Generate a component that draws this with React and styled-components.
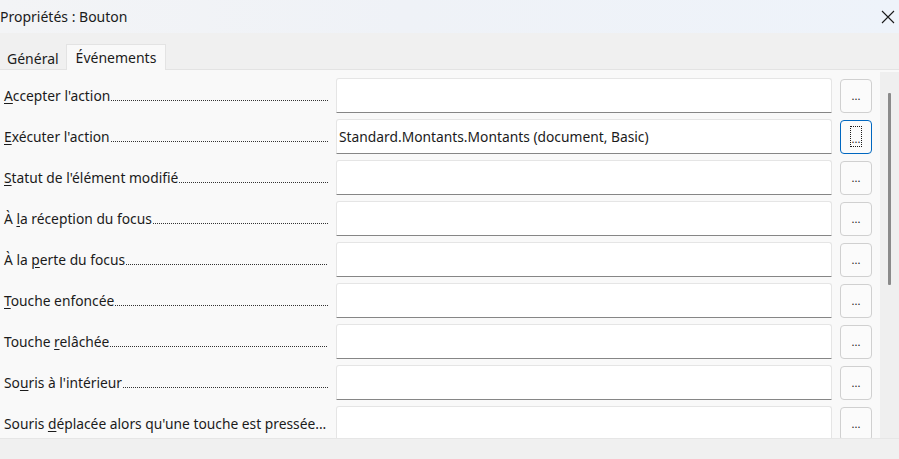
import React from 'react';
import styled, { createGlobalStyle } from 'styled-components';

const GlobalStyle = createGlobalStyle`
  html, body {
    margin: 0;
    padding: 0;
    background: #f0f0f0;
  }
  body {
    font-family: 'Noto Sans', 'Open Sans', sans-serif;
    color: #1b1b1b;
  }
`;

const Window = styled.div`
  width: 899px;
  height: 459px;
  display: flex;
  flex-direction: column;
  overflow: hidden;
  background: #f0f0f0;
`;

const TitleBar = styled.div`
  height: 33px;
  flex: none;
  display: flex;
  align-items: center;
  justify-content: space-between;
  background: linear-gradient(to right, #f3f4f6 0%, #eff2f7 45%, #eef3fa 100%);
`;

const Title = styled.span`
  font-size: 14px;
`;

const CloseButton = styled.button`
  width: 46px;
  height: 33px;
  border: none;
  background: transparent;
  display: flex;
  align-items: center;
  justify-content: flex-end;
  padding: 0 4px 0 0;
  color: #1a1a1a;
`;

const TabStrip = styled.div`
  height: 36px;
  flex: none;
  display: flex;
  align-items: flex-end;
`;

const Tab = styled.div`
  height: ${({ active }) => (active ? '26px' : '24px')};
  padding: 0 ${({ active }) => (active ? '9px' : '6px')};
  display: flex;
  align-items: center;
  font-size: 14px;
  box-sizing: border-box;
  background: ${({ active }) => (active ? '#f9f9f9' : 'transparent')};
  border: 1px solid ${({ active }) => (active ? '#e3e3e3' : 'transparent')};
  border-bottom: none;
  margin-bottom: -1px;
  position: relative;
  z-index: ${({ active }) => (active ? 1 : 0)};
`;

const Body = styled.div`
  flex: 1;
  display: flex;
  background: #f9f9f9;
  border-top: 1px solid #e3e3e3;
  overflow: hidden;
`;

const EventGrid = styled.div`
  display: grid;
  grid-template-columns: 324px 496px 32px;
  grid-auto-rows: 35px;
  column-gap: 8px;
  row-gap: 6px;
  padding: 8px 0 0 4px;
  align-items: center;
`;

const Label = styled.div`
  display: flex;
  align-items: baseline;
  font-size: 13.8px;
  white-space: nowrap;
`;

const LabelText = styled.span`
  white-space: pre;
`;

const Leader = styled.span`
  flex: 1;
  height: 1px;
  margin-left: 1px;
  background: repeating-linear-gradient(to right, #333 0 1px, transparent 1px 2px);
`;

const Key = styled.span`
  text-decoration: underline;
  text-underline-offset: 2px;
`;

const Field = styled.div`
  height: 35px;
  box-sizing: border-box;
  background: #fff;
  border: 1px solid #e5e5e5;
  border-bottom: 1px solid #868686;
  border-radius: 3px 3px 0 0;
  display: flex;
  align-items: center;
  padding-left: 2px;
  font-size: 13.8px;
  white-space: nowrap;
`;

const DotsButton = styled.button`
  width: 32px;
  height: 34px;
  box-sizing: border-box;
  padding: 0;
  border-radius: 4px;
  border: 1px solid ${({ focused }) => (focused ? '#0067c0' : '#d0d0d0')};
  background: #fbfbfb;
  display: flex;
  align-items: center;
  justify-content: center;
  font-family: 'Noto Sans', sans-serif;
  font-size: 11px;
  color: #1a1a1a;
`;

const FocusRing = styled.span`
  width: 12px;
  height: 21px;
  box-sizing: border-box;
  border: 1px dotted #1a1a1a;
  display: flex;
  align-items: flex-end;
  justify-content: center;
  line-height: 14px;
`;

const ScrollTrack = styled.div`
  width: 19px;
  margin: 2px 0 0 8px;
  background: #efefef;
  padding-top: 21px;
  box-sizing: border-box;
  display: flex;
  justify-content: center;
`;

const Thumb = styled.div`
  width: 3px;
  height: 192px;
  background: #8a8a8a;
  border-radius: 1px;
`;

const Footer = styled.div`
  height: 20px;
  flex: none;
  border-top: 1px solid #e6e6e6;
  background: #f0f0f0;
`;

const rows = [
  { before: '', key: 'A', after: "ccepter l'action" },
  { before: '', key: 'E', after: "xécuter l'action", value: 'Standard.Montants.Montants (document, Basic)', focused: true },
  { before: '', key: 'S', after: "tatut de l'élément modifié" },
  { before: 'À ', key: 'l', after: 'a réception du focus' },
  { before: 'À la ', key: 'p', after: 'erte du focus' },
  { before: '', key: 'T', after: 'ouche enfoncée' },
  { before: 'Touche ', key: 'r', after: 'elâchée' },
  { before: 'So', key: 'u', after: "ris à l'intérieur" },
  { before: 'Souris ', key: 'd', after: "éplacée alors qu'une touche est pressée", noLeader: true },
];

const App = () => (
  <>
    <GlobalStyle />
    <Window>
      <TitleBar>
        <Title>Propriétés : Bouton</Title>
        <CloseButton aria-label="Fermer">
          <svg width="14" height="14" viewBox="0 0 14 14">
            <path d="M1 1 L13 13 M13 1 L1 13" stroke="#1a1a1a" strokeWidth="1.1" fill="none" />
          </svg>
        </CloseButton>
      </TitleBar>
      <TabStrip>
        <Tab>Général</Tab>
        <Tab active>Événements</Tab>
      </TabStrip>
      <Body>
        <EventGrid>
          {rows.map((r) => (
            <React.Fragment key={r.after}>
              <Label>
                <LabelText>
                  {r.before}
                  <Key>{r.key}</Key>
                  {r.after}
                  {r.noLeader ? '...' : ''}
                </LabelText>
                {!r.noLeader && <Leader />}
              </Label>
              <Field>{r.value}</Field>
              <DotsButton focused={r.focused}>
                {r.focused ? <FocusRing>...</FocusRing> : '...'}
              </DotsButton>
            </React.Fragment>
          ))}
        </EventGrid>
        <ScrollTrack>
          <Thumb />
        </ScrollTrack>
      </Body>
      <Footer />
    </Window>
  </>
);

export default App;
